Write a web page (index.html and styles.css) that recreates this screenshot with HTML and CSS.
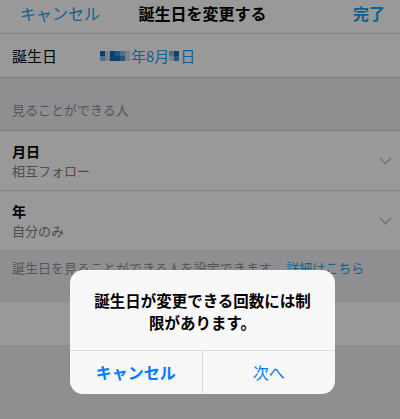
FILE: index.html
```html
<!DOCTYPE html>
<html lang="ja">
<head>
    <meta charset="UTF-8">
    <meta name="viewport" content="width=device-width, initial-scale=1.0">
    <title>誕生日を変更する</title>
    <link rel="stylesheet" href="styles.css">
</head>
<body>
    <div class="screen">
        <!-- ナビゲーションバー -->
        <header class="nav">
            <span class="nav-btn">キャンセル</span>
            <h1 class="nav-title">誕生日を変更する</h1>
            <span class="nav-btn done">完了</span>
        </header>

        <!-- 誕生日 -->
        <div class="cell birthday">
            <span class="label">誕生日</span>
            <span class="date">
                <span class="mosaic year">
                    <i class="m1"></i><i class="m4"></i><i class="m1"></i><i class="m2"></i><i class="m3"></i><i class="m4"></i>
                    <i class="m3"></i><i class="m4"></i><i class="m1"></i><i class="m1"></i><i class="m2"></i><i class="m4"></i>
                </span>年8月<span class="mosaic day">
                    <i class="m3"></i><i class="m1"></i>
                    <i class="m4"></i><i class="m2"></i>
                </span>日
            </span>
        </div>

        <div class="section-head">見ることができる人</div>

        <div class="cell option">
            <div>
                <div class="opt-title">月日</div>
                <div class="opt-sub">相互フォロー</div>
            </div>
            <svg class="chevron" width="13" height="8" viewBox="0 0 13 8"><path d="M1 1l5.5 5.5L12 1" fill="none" stroke="#c4c4c8" stroke-width="1.6"/></svg>
        </div>
        <div class="cell option">
            <div>
                <div class="opt-title">年</div>
                <div class="opt-sub">自分のみ</div>
            </div>
            <svg class="chevron" width="13" height="8" viewBox="0 0 13 8"><path d="M1 1l5.5 5.5L12 1" fill="none" stroke="#c4c4c8" stroke-width="1.6"/></svg>
        </div>

        <div class="section-foot">誕生日を見ることができる人を設定できます。 <span class="link">詳細はこちら</span></div>

        <div class="cell empty"></div>

        <!-- ダイアログ -->
        <div class="dim"></div>
        <div class="alert">
            <div class="alert-msg">誕生日が変更できる回数には制限があります。</div>
            <div class="alert-btns">
                <span class="alert-btn strong">キャンセル</span>
                <span class="alert-btn">次へ</span>
            </div>
        </div>
    </div>
</body>
</html>
```

FILE: styles.css
```css
body {
    margin: 0;
    font-family: "Noto Sans CJK JP", "Noto Sans", sans-serif;
    background-color: #efeff4;
}
.screen {
    position: relative;
    width: 400px;
    height: 419px;
    overflow: hidden;
    background-color: #efeff4;
}
.nav {
    display: grid;
    grid-template-columns: 1fr auto 1fr;
    align-items: start;
    box-sizing: border-box;
    height: 34px;
    padding: 0 15px 0 20px;
    background-color: #fff;
    border-bottom: 1px solid #d4d4d8;
}
.nav-btn {
    font-size: 16px;
    line-height: 26px;
    color: #1da1f2;
}
.nav-btn.done {
    font-weight: bold;
    text-align: right;
}
.nav-title {
    margin: 0;
    font-size: 16px;
    font-weight: bold;
    line-height: 26px;
    color: #000;
}
.cell {
    box-sizing: border-box;
    background-color: #fff;
}
.birthday {
    display: flex;
    align-items: center;
    height: 44px;
    padding-left: 12px;
    border-bottom: 1px solid #d4d4d8;
}
.label {
    width: 88px;
    font-size: 15px;
    color: #000;
}
.date {
    display: flex;
    align-items: center;
    font-size: 15px;
    color: #1da1f2;
}
.mosaic {
    display: grid;
    grid-template-columns: repeat(6, 5px);
    grid-auto-rows: 5px;
    margin-right: 1px;
}
.mosaic.day {
    grid-template-columns: repeat(2, 5px);
    margin: 0 1px 0 0;
}
.mosaic i {
    display: block;
}
.m1 { background-color: #0f6fb8; }
.m2 { background-color: #3a94d6; }
.m3 { background-color: #86b8e2; }
.m4 { background-color: #cbd9e6; }
.section-head {
    display: flex;
    align-items: flex-end;
    box-sizing: border-box;
    height: 52px;
    padding: 0 12px 11px;
    font-size: 13px;
    line-height: 18px;
    color: #8e8e93;
}
.option {
    display: flex;
    justify-content: space-between;
    align-items: center;
    height: 60px;
    padding: 0 8px 0 12px;
    border-top: 1px solid #d4d4d8;
}
.opt-title {
    font-size: 14px;
    font-weight: bold;
    line-height: 20px;
    color: #000;
}
.opt-sub {
    font-size: 13px;
    line-height: 20px;
    color: #808080;
}
.section-foot {
    box-sizing: border-box;
    height: 52px;
    padding: 9px 12px 0;
    font-size: 13px;
    line-height: 18px;
    color: #8e8e93;
}
.link {
    color: #1da1f2;
}
.empty {
    height: 43px;
}
.dim {
    position: absolute;
    inset: 0;
    background-color: rgba(0, 0, 0, 0.4);
}
.alert {
    position: absolute;
    left: 70px;
    top: 270px;
    width: 265px;
    border-radius: 13px;
    background-color: #f8f8f8;
    overflow: hidden;
}
.alert-msg {
    padding: 19px 18px 17px;
    font-size: 15.5px;
    font-weight: bold;
    line-height: 22px;
    text-align: center;
    color: #000;
}
.alert-btns {
    display: grid;
    grid-template-columns: 1fr 1fr;
    border-top: 1px solid #dcdcdc;
}
.alert-btn {
    height: 43px;
    font-size: 16px;
    line-height: 43px;
    text-align: center;
    color: #007aff;
}
.alert-btn.strong {
    font-weight: bold;
    border-right: 1px solid #dcdcdc;
}
```
